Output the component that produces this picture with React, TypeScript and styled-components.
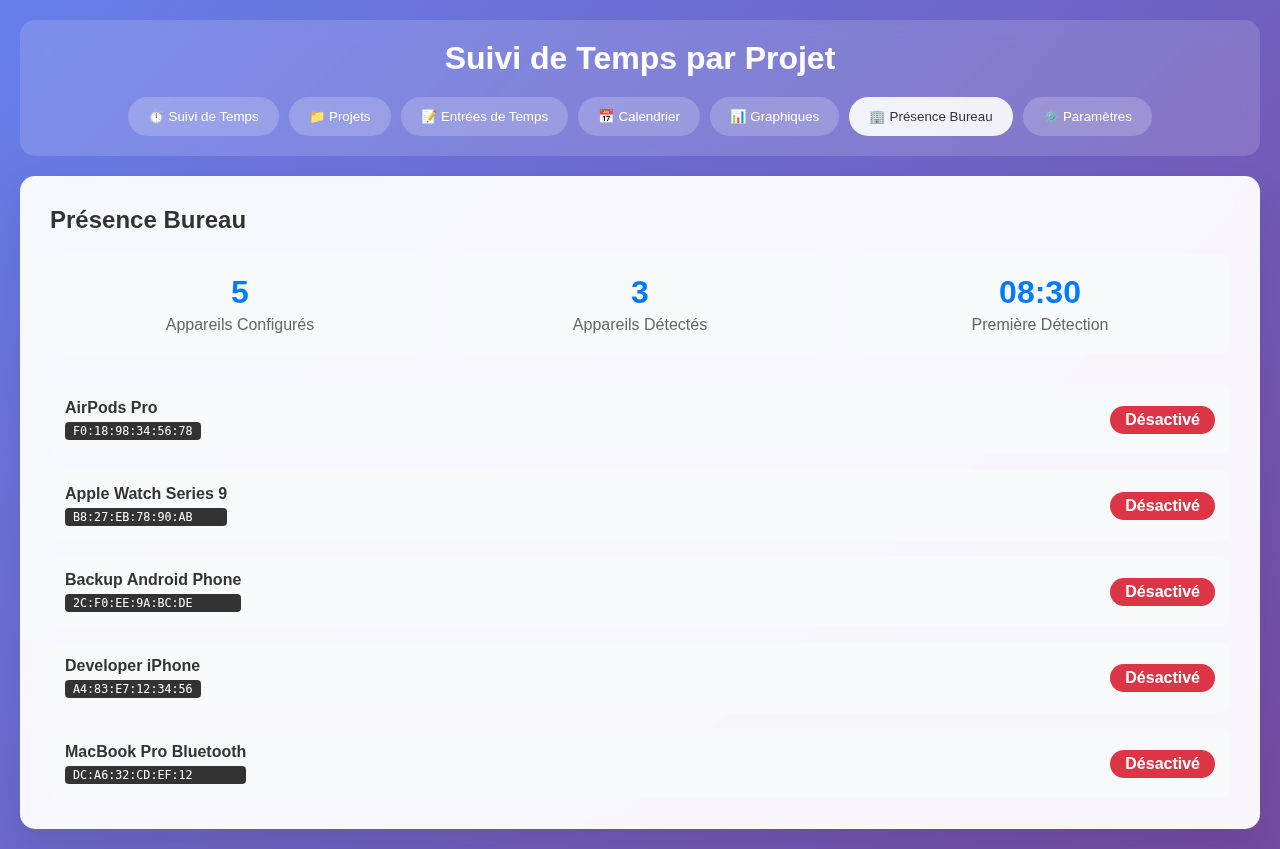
import React from "react";
import styled, { createGlobalStyle } from "styled-components";

const GlobalStyle = createGlobalStyle`
  * { margin: 0; padding: 0; box-sizing: border-box; }
  body {
    font-family: "Liberation Sans", Arial, sans-serif;
    background: linear-gradient(135deg, #667eea 0%, #764ba2 100%);
    min-height: 100vh;
    color: #333;
  }
`;

const Container = styled.div`
  padding: 20px;
`;

const Header = styled.header`
  background: rgba(255, 255, 255, 0.15);
  backdrop-filter: blur(10px);
  border-radius: 15px;
  padding: 20px;
  margin-bottom: 20px;
`;

const Title = styled.h1`
  color: white;
  text-align: center;
  font-size: 32px;
  line-height: 37px;
  margin-bottom: 20px;
`;

const Nav = styled.nav`
  display: flex;
  justify-content: center;
  gap: 10px;
`;

const NavButton = styled.button<{ $active?: boolean }>`
  background: ${(p) => (p.$active ? "rgba(255, 255, 255, 0.9)" : "rgba(255, 255, 255, 0.2)")};
  color: ${(p) => (p.$active ? "#333" : "white")};
  border: none;
  border-radius: 25px;
  padding: 12px 20px;
  font-family: "Liberation Sans", Arial, sans-serif;
  font-size: 13.3333px;
  cursor: pointer;
`;

const TabIcon = styled.span`
  margin-right: -0.33px;
`;

const Content = styled.main`
  background: rgba(255, 255, 255, 0.95);
  backdrop-filter: blur(10px);
  border-radius: 15px;
  padding: 30px;
  box-shadow: 0 20px 40px rgba(0, 0, 0, 0.1);
`;

const SectionTitle = styled.h2`
  font-size: 24px;
  line-height: 27px;
  margin-bottom: 21px;
`;

const Stats = styled.div`
  display: grid;
  grid-template-columns: repeat(3, 1fr);
  gap: 20px;
  margin-bottom: 30px;
`;

const StatCard = styled.div`
  background: #f8f9fa;
  border-radius: 10px;
  padding: 20px;
  text-align: center;
`;

const StatValue = styled.div`
  color: #007bff;
  font-size: 32px;
  font-weight: bold;
  line-height: 37px;
  margin-bottom: 5px;
`;

const StatLabel = styled.div`
  color: #666;
  line-height: 18px;
`;

const DeviceList = styled.div`
  display: grid;
  gap: 15px;
`;

const DeviceRow = styled.div`
  display: flex;
  align-items: center;
  justify-content: space-between;
  background: #f8f9fa;
  border-radius: 10px;
  padding: 15px;
  height: 71px;
`;

const DeviceInfo = styled.div`
  display: flex;
  flex-direction: column;
  gap: 5px;
`;

const DeviceName = styled.div`
  font-weight: bold;
  line-height: 18px;
`;

const MacAddress = styled.div`
  background: #333;
  color: white;
  border-radius: 4px;
  padding: 2px 8px;
  font-family: "DejaVu Sans Mono", monospace;
  font-size: 11.7px;
  line-height: 14px;
`;

const Status = styled.span`
  background: #dc3545;
  color: white;
  border-radius: 20px;
  padding: 5px 15px;
  font-weight: bold;
  line-height: 18px;
`;

const tabs = [
  { icon: "⏱️", label: "Suivi de Temps" },
  { icon: "📁", label: "Projets" },
  { icon: "📝", label: "Entrées de Temps" },
  { icon: "📅", label: "Calendrier" },
  { icon: "📊", label: "Graphiques" },
  { icon: "🏢", label: "Présence Bureau" },
  { icon: "⚙️", label: "Paramètres" },
];

const stats = [
  { value: "5", label: "Appareils Configurés" },
  { value: "3", label: "Appareils Détectés" },
  { value: "08:30", label: "Première Détection" },
];

const devices = [
  { name: "AirPods Pro", mac: "F0:18:98:34:56:78" },
  { name: "Apple Watch Series 9", mac: "B8:27:EB:78:90:AB" },
  { name: "Backup Android Phone", mac: "2C:F0:EE:9A:BC:DE" },
  { name: "Developer iPhone", mac: "A4:83:E7:12:34:56" },
  { name: "MacBook Pro Bluetooth", mac: "DC:A6:32:CD:EF:12" },
];

export default function App() {
  return (
    <>
      <GlobalStyle />
      <Container>
        <Header>
          <Title>Suivi de Temps par Projet</Title>
          <Nav>
            {tabs.map((tab, i) => (
              <NavButton key={tab.label} $active={i === 5}>
                <TabIcon>{tab.icon}</TabIcon> {tab.label}
              </NavButton>
            ))}
          </Nav>
        </Header>
        <Content>
          <SectionTitle>Présence Bureau</SectionTitle>
          <Stats>
            {stats.map((s) => (
              <StatCard key={s.label}>
                <StatValue>{s.value}</StatValue>
                <StatLabel>{s.label}</StatLabel>
              </StatCard>
            ))}
          </Stats>
          <DeviceList>
            {devices.map((d) => (
              <DeviceRow key={d.mac}>
                <DeviceInfo>
                  <DeviceName>{d.name}</DeviceName>
                  <MacAddress>{d.mac}</MacAddress>
                </DeviceInfo>
                <Status>Désactivé</Status>
              </DeviceRow>
            ))}
          </DeviceList>
        </Content>
      </Container>
    </>
  );
}
